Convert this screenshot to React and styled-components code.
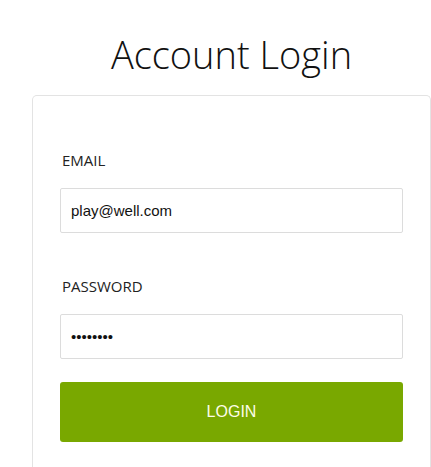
import React from 'react';
import styled, { createGlobalStyle } from 'styled-components';

const GlobalStyle = createGlobalStyle`
  body {
    margin: 0;
    background: #ffffff;
    font-family: "Open Sans", "Liberation Sans", sans-serif;
  }
`;

class App extends React.Component {
  constructor(props) {
    super(props);
    this.state = {
      email: 'play@well.com',
      password: '12345678',
    };
  }

  render() {
    return (
      <Page>
        <GlobalStyle />
        <Title>Account Login</Title>
        <Card>
          <Field>
            <Label>EMAIL</Label>
            <Input type="text" defaultValue={this.state.email} />
          </Field>
          <Field $last>
            <Label>PASSWORD</Label>
            <Input type="password" defaultValue={this.state.password} />
          </Field>
          <Button>LOGIN</Button>
        </Card>
      </Page>
    );
  }
}

const Page = styled.div`
  padding-left: 32px;
  width: 399px;
  display: flex;
  flex-direction: column;
`;

const Title = styled.h1`
  margin: 0;
  padding-top: 31px;
  height: 95px;
  box-sizing: border-box;
  text-align: center;
  font-family: "Open Sans", sans-serif;
  font-weight: 300;
  font-size: 38px;
  line-height: 46px;
  color: #111;
`;

const Card = styled.div`
  border: 1px solid #e3e3e3;
  border-bottom: none;
  border-radius: 5px 5px 0 0;
  padding: 54px 27px 40px;
  display: flex;
  flex-direction: column;
`;

const Field = styled.div`
  display: flex;
  flex-direction: column;
  margin-bottom: ${(props) => (props.$last ? '23px' : '43px')};
`;

const Label = styled.label`
  font-family: "Open Sans", sans-serif;
  font-size: 15px;
  line-height: 20px;
  color: #222;
  padding-left: 2px;
  margin-bottom: 18px;
`;

const Input = styled.input`
  height: 45px;
  box-sizing: border-box;
  border: 1px solid #dcdcdc;
  border-radius: 2px;
  padding: 0 10px;
  font-family: "Liberation Sans", Arial, sans-serif;
  font-size: 15px;
  color: #111;
  outline: none;
`;

const Button = styled.button`
  height: 60px;
  border: none;
  border-radius: 3px;
  background: #79a800;
  color: #fdfde8;
  font-family: "Liberation Sans", Arial, sans-serif;
  font-size: 16px;
  cursor: pointer;
`;

export default App;
